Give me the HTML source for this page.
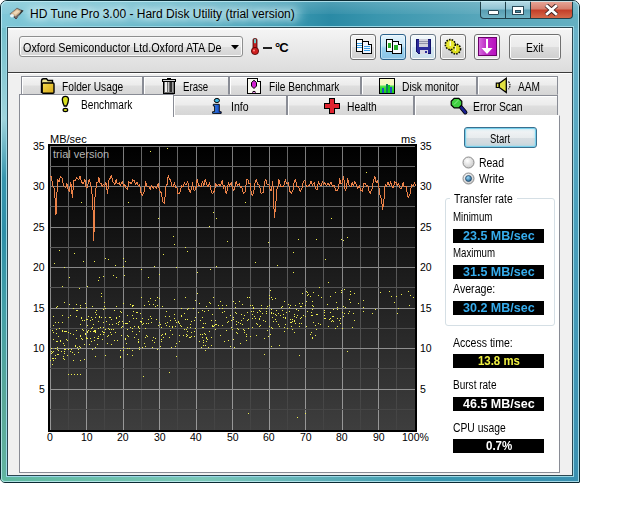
<!DOCTYPE html>
<html><head><meta charset="utf-8">
<style>
*{box-sizing:border-box;margin:0;padding:0}
html,body{width:640px;height:512px;overflow:hidden;background:#fff;font-family:"Liberation Sans",sans-serif;color:#000}
.a{position:absolute}
#win{left:0;top:0;width:580px;height:483px;border:1px solid #0b2a33;border-radius:7px 7px 1px 5px;overflow:hidden}
#hl{left:0;top:0;width:580px;height:483px;border-radius:7px 7px 5px 5px;box-shadow:inset 0 0 0 2px #0b2a33, inset 0 0 0 1px #0b2a33}
#client{left:7px;top:27px;width:566px;height:449px;border:1px solid #2b4650;background:#f0f0f0;box-shadow:0 0 0 1px #9ad7e5}
#panel{left:0;top:0;width:564px;height:44px;background:linear-gradient(#fff 0px,#fff 1px,#f4f4f4 2px,#dcdcdc 100%)}
#pline{left:0;top:44px;width:564px;height:1px;background:#3c3c3c}
#pline2{left:0;top:45px;width:564px;height:1px;background:#fff}
.title{left:29px;top:6px;font-size:12px;color:#000;white-space:nowrap;text-shadow:0 0 6px #e8f8fb,0 0 10px #e8f8fb}
.cap{top:0;height:18px;border:1px solid #20404a;border-top:none}
.ui{font-size:11px;letter-spacing:-0.2px;white-space:nowrap}
.btn{width:26px;height:26px;border:1px solid #707070;border-radius:3px;background:linear-gradient(#f2f2f2 0%,#ebebeb 48%,#dddddd 52%,#cfcfcf 100%);box-shadow:inset 0 0 0 1px #fbfbfb}
.tab{height:19px;border:1px solid #898c95;border-bottom-color:#d4d4d4;background:linear-gradient(#f4f4f4 0%,#ececec 45%,#dedede 55%,#d6d6d6 100%);box-shadow:inset 1px 1px 0 #fff}
.tt{position:absolute;font-size:11px;letter-spacing:-0.3px;white-space:nowrap;top:3px}
.val{left:453px;width:91px;height:14px;background:#000}
.lab{left:452px;font-size:11px;letter-spacing:-0.2px;white-space:nowrap}
.ax{font-size:10.5px;white-space:nowrap;color:#000}
.lbl{font-size:12px;line-height:12px;white-space:nowrap;transform-origin:0 0}
</style></head><body>
<div id="win" class="a">
  <div class="a" style="left:0;top:0;width:578px;height:27px;background:linear-gradient(90deg,#80c8d8 0%,#70bccd 15%,#5aaec2 35%,#3a98b0 50%,#2a8aa5 57%,#3a96ae 65%,#5aa8bc 85%,#64b0c2 100%)"></div>
  <div class="a" style="left:22px;top:4px;width:280px;height:18px;border-radius:9px;background:rgba(190,235,245,0.32);filter:blur(4px)"></div>
  <div class="a" style="left:0;top:0;width:578px;height:13px;background:linear-gradient(rgba(255,255,255,0.18),rgba(255,255,255,0.05))"></div>
  <div class="a" style="left:0;top:27px;width:7px;height:455px;background:linear-gradient(#74c0cc 0%,#a0d4dc 20%,#3896ae 33%,#2e8fa8 45%,#45a0a8 62%,#5aa898 82%,#62b4a0 100%)"></div>
  <div class="a" style="left:571px;top:27px;width:7px;height:455px;background:linear-gradient(#6ab2c8 0%,#4aa0bc 40%,#3a90b0 100%)"></div>
  <div class="a" style="left:0;top:475px;width:578px;height:7px;background:linear-gradient(90deg,#5fb8a0 0%,#7cc8b8 35%,#60b0b8 55%,#3a98b0 75%,#3a90b0 100%)"></div>
<!-- app icon -->
  <svg class="a" style="left:7px;top:4px" width="20" height="18" viewBox="8 5 20 18">
    <path d="M9.5 14 L17 7.8 L23.5 10.8 L16 19 Z" fill="#6a6868"/>
    <path d="M11 13.5 L17 8.8 L21.5 11.2 L15.5 16.5 Z" fill="#d8b890"/>
    <path d="M13 13 L17 10 L19.5 11.5 L15.5 14.8 Z" fill="#f0d8b8"/>
    <path d="M21.5 9.8 L23.5 10.8 L19 15.5 Z" fill="#303838"/>
    <ellipse cx="12" cy="15.8" rx="2" ry="1.8" fill="#e8f4f8"/>
    <path d="M14 17 L16 19 L17.5 17.5" fill="none" stroke="#504850" stroke-width="1"/>
  </svg>
  <div class="a title">HD Tune Pro 3.00 - Hard Disk Utility (trial version)</div>
  <!-- caption buttons -->
  <div class="a cap" style="left:479px;width:26px;border-radius:0 0 0 4px;background:linear-gradient(#b7dbe6 0%,#92c4d4 45%,#5a9fb3 55%,#6fb3c4 100%)"></div>
  <div class="a cap" style="left:504px;width:26px;background:linear-gradient(#b7dbe6 0%,#92c4d4 45%,#5a9fb3 55%,#6fb3c4 100%)"></div>
  <div class="a cap" style="left:529px;width:43px;border-radius:0 0 4px 0;background:linear-gradient(#e8a89a 0%,#d7806e 45%,#c4402a 55%,#d46a4a 100%)"></div>
  <div class="a" style="left:487px;top:9px;width:11px;height:5px;background:#fff;border:1px solid #2a4a58;border-radius:1px"></div>
  <div class="a" style="left:511px;top:5px;width:12px;height:9px;border:1px solid #2a4a58;background:#fff"></div><div class="a" style="left:514px;top:9px;width:6px;height:3px;background:#4a8aa0;border:1px solid #2a4a58"></div>
  <svg class="a" style="left:543px;top:3px" width="15" height="12" viewBox="0 0 14 11">
    <path d="M2 1 L12 10 M12 1 L2 10" stroke="#3a2020" stroke-width="4.2"/>
    <path d="M2 1 L12 10 M12 1 L2 10" stroke="#fff" stroke-width="2.6"/>
  </svg>
  <div class="a" style="left:0;top:0;width:578px;height:481px;border-radius:6px 6px 0 4px;box-shadow:inset 0 0 0 1px rgba(200,240,248,0.75)"></div>
</div>

<div id="client" class="a">
  <div id="panel" class="a"></div>
  <div id="pline" class="a"></div>
  <div id="pline2" class="a"></div>
</div>

<!-- combo box -->
<div class="a" style="left:19px;top:36px;width:224px;height:21px;border:1px solid #8e8f8f;border-radius:3px;background:linear-gradient(#f4f4f4 0%,#ececec 50%,#dfdfdf 51%,#d4d4d4 100%);box-shadow:inset 0 0 0 1px #fafafa"></div>

<svg class="a" style="left:231px;top:45px" width="8" height="5"><path d="M0 0 H8 L4 4.5 Z" fill="#000"/></svg>

<!-- thermometer -->
<svg class="a" style="left:250px;top:38px" width="10" height="17" viewBox="0 0 10 17">
  <rect x="3" y="0.5" width="4" height="11" rx="1.5" fill="#c02020" stroke="#400" stroke-width="0.8"/>
  <rect x="4" y="1.2" width="2" height="4" fill="#6cc"/>
  <circle cx="5" cy="13" r="3.6" fill="#d02020" stroke="#400" stroke-width="0.8"/>
  <circle cx="4" cy="12.5" r="1" fill="#f88"/>
</svg>
<div class="a" style="left:263px;top:47px;width:9px;height:2px;background:#202020"></div>
<div class="a" style="left:275px;top:40px;font-size:13px;font-weight:bold;white-space:nowrap;letter-spacing:-1px">°C</div>

<!-- toolbar buttons -->
<div class="a btn" style="left:350px;top:34px"></div>
<div class="a btn" style="left:380px;top:34px;border-color:#2c628b;background:linear-gradient(#e5f4fc 0%,#c4e5f6 45%,#98d1ef 55%,#8ac4e6 100%);box-shadow:inset 0 0 0 1px rgba(255,255,255,0.4)"></div>
<div class="a btn" style="left:410px;top:34px;border-color:#6a7a88;background:linear-gradient(#f2f8fc 0%,#e6f2f8 50%,#d6e8f2 51%,#cadfea 100%)"></div>
<div class="a btn" style="left:440px;top:34px"></div>
<div class="a btn" style="left:474px;top:34px;background:linear-gradient(#f6f6f6,#e8e8e8)"></div>
<div class="a btn" style="left:509px;top:34px;width:52px"></div>

<!-- icons -->
<svg class="a" style="left:350px;top:34px" width="26" height="26" viewBox="350 34 26 26" shape-rendering="crispEdges">
  <rect x="356.5" y="39.5" width="6" height="12" fill="#fff" stroke="#000"/>
  <rect x="357" y="43" width="5" height="1" fill="#38a0e8"/><rect x="357" y="45" width="5" height="1" fill="#38a0e8"/><rect x="357" y="47" width="5" height="1" fill="#38a0e8"/>
  <path d="M362.5 41.5 H368.5 L371.5 44.5 V53.5 H362.5 Z" fill="#eef3fc" stroke="#000"/>
  <path d="M368.5 41.5 V44.5 H371.5" fill="#fff" stroke="#000"/>
  <rect x="364" y="46" width="6" height="1" fill="#38a0e8"/><rect x="364" y="48" width="6" height="1" fill="#38a0e8"/><rect x="364" y="50" width="6" height="1" fill="#38a0e8"/>
</svg>
<svg class="a" style="left:380px;top:34px" width="26" height="26" viewBox="380 34 26 26" shape-rendering="crispEdges">
  <rect x="386.5" y="39.5" width="6" height="12" fill="#fff" stroke="#000"/>
  <rect x="388" y="43" width="3" height="5" fill="#28b028"/>
  <path d="M392.5 41.5 H398.5 L401.5 44.5 V53.5 H392.5 Z" fill="#f4f8ff" stroke="#000"/>
  <path d="M398.5 41.5 V44.5 H401.5" fill="#fff" stroke="#000"/>
  <rect x="394" y="45" width="4" height="5" fill="#28b028"/>
</svg>
<svg class="a" style="left:410px;top:34px" width="26" height="26" viewBox="410 34 26 26" shape-rendering="crispEdges">
  <path d="M416 39 H431 V54 H418 L416 52 Z" fill="#2a2a9a"/>
  <path d="M416.5 39.5 H430.5 V53.5 H418.5 L416.5 51.5 Z" fill="none" stroke="#10106a"/>
  <rect x="419" y="39" width="9" height="8" fill="#d0d0dc"/>
  <rect x="419" y="41" width="9" height="1" fill="#9090a8"/><rect x="419" y="43" width="9" height="1" fill="#9090a8"/>
  <rect x="420" y="50" width="8" height="4" fill="#d8d8e4"/>
  <rect x="425" y="51" width="2" height="2" fill="#2a2a9a"/>
</svg>
<svg class="a" style="left:440px;top:34px" width="26" height="26" viewBox="440 34 26 26">
  <circle cx="455.5" cy="49" r="5" fill="#e0e020" stroke="#101000" stroke-width="1.6" stroke-dasharray="1.6 1.1"/>
  <circle cx="450.3" cy="44.6" r="5" fill="#e8e830" stroke="#101000" stroke-width="1.6" stroke-dasharray="1.6 1.1"/>
  <rect x="449.6" y="41" width="1.2" height="5" fill="#fff"/>
  <rect x="454.8" y="46" width="1.2" height="5" fill="#f8f8c0"/>
</svg>
<svg class="a" style="left:474px;top:34px" width="26" height="26" viewBox="474 34 26 26">
  <defs><linearGradient id="pg" x1="0" y1="0" x2="1" y2="0"><stop offset="0" stop-color="#d870e0"/><stop offset="0.4" stop-color="#c030c8"/><stop offset="1" stop-color="#b810c0"/></linearGradient></defs>
  <rect x="478.5" y="37.5" width="18" height="18" fill="url(#pg)" stroke="#6a006a" shape-rendering="crispEdges"/>
  <rect x="486" y="39" width="2" height="10" fill="#fff"/>
  <path d="M481.5 48 H492.5 L487 54 Z" fill="#fff"/>
</svg>
<!-- tabs row 1 -->
<div class="a tab" style="left:21px;top:76px;width:122px"></div>
<div class="a tab" style="left:143px;top:76px;width:86px"></div>
<div class="a tab" style="left:229px;top:76px;width:132px"></div>
<div class="a tab" style="left:361px;top:76px;width:116px"></div>
<div class="a tab" style="left:477px;top:76px;width:81px"></div>
<!-- tabs row 2 -->
<div class="a tab" style="left:173px;top:95px;width:114px;height:21px"></div>
<div class="a tab" style="left:287px;top:95px;width:127px;height:21px"></div>
<div class="a tab" style="left:414px;top:95px;width:144px;height:21px"></div>
<!-- content panel -->
<div class="a" style="left:19px;top:115px;width:541px;height:358px;border:1px solid #898c95;border-top-color:#fff;background:#fff"></div>
<!-- selected tab -->
<div class="a" style="left:19px;top:94px;width:155px;height:23px;border:1px solid #898c95;border-bottom:none;background:#fff"></div>

<!-- tab icons -->
<svg class="a" style="left:38px;top:76px" width="20" height="20" viewBox="38 76 20 20">
  <path d="M41.5 93 V81 Q41.5 78.8 43.5 78.8 H46.5 L48 80.5 H52.5 V86" fill="#f0e890" stroke="#000" stroke-width="1.4"/>
  <defs><linearGradient id="fg" x1="0" y1="0" x2="1" y2="1"><stop offset="0" stop-color="#f4dc50"/><stop offset="1" stop-color="#d8a818"/></linearGradient></defs>
  <rect x="42.2" y="83" width="11.8" height="10.3" rx="1" fill="url(#fg)" stroke="#000" stroke-width="1.4"/>
</svg>
<svg class="a" style="left:160px;top:76px" width="18" height="20" viewBox="160 76 18 20" shape-rendering="crispEdges">
  <rect x="163.5" y="80.5" width="11" height="12.5" fill="#707070" stroke="#000"/>
  <rect x="165" y="82" width="2" height="10" fill="#f0f0f0"/><rect x="168" y="82" width="1" height="10" fill="#c8c8c8"/>
  <rect x="170" y="82" width="2" height="10" fill="#303030"/><rect x="172" y="82" width="1" height="10" fill="#a0a0a0"/>
  <rect x="162.5" y="79" width="13" height="2.5" fill="#d8d8d8" stroke="#000"/>
  <rect x="167" y="77.5" width="4" height="1.5" fill="#000"/>
</svg>
<svg class="a" style="left:244px;top:76px" width="20" height="20" viewBox="244 76 20 20">
  <path d="M247.5 78.5 H257.5 L260.5 81.5 V93.5 H247.5 Z" fill="#f8f8f0" stroke="#000" stroke-width="1.1" shape-rendering="crispEdges"/>
  <path d="M257.5 78.5 V81.5 H260.5" fill="#fff" stroke="#000" stroke-width="1" shape-rendering="crispEdges"/>
  <path d="M254 80.3 L256.5 82.5 V86 L254 88.5 L251.5 86 V82.5 Z" fill="#d020d0" stroke="#000" stroke-width="1"/>
  <path d="M252.2 92.4 Q254 89.8 255.8 92.4" fill="#d020d0" stroke="#000" stroke-width="1"/>
</svg>
<svg class="a" style="left:376px;top:76px" width="22" height="20" viewBox="376 76 22 20" shape-rendering="crispEdges">
  <defs><linearGradient id="dmg" x1="0" y1="0" x2="0" y2="1"><stop offset="0" stop-color="#fafac8"/><stop offset="0.4" stop-color="#f8f8c0"/><stop offset="0.55" stop-color="#40e040"/><stop offset="1" stop-color="#10d010"/></linearGradient></defs>
  <rect x="379.5" y="78.5" width="15" height="15" fill="url(#dmg)" stroke="#000" stroke-width="1.2"/>
  <rect x="382" y="88" width="2" height="5" fill="#2050c0"/>
  <rect x="386" y="84" width="1.5" height="9" fill="#108060"/>
  <rect x="387.5" y="85" width="2.5" height="8" fill="#10d020"/>
  <rect x="390" y="87" width="2" height="6" fill="#2050c0"/>
</svg>
<svg class="a" style="left:492px;top:76px" width="24" height="20" viewBox="492 76 24 20">
  <path d="M496.3 83.2 H499.3 V87.5 H496.3 Z" fill="#e0e040" stroke="#000" stroke-width="1.2"/>
  <path d="M499.3 83.2 L506.3 78.3 V92.5 L499.3 87.5 Z" fill="#e0e040" stroke="#000" stroke-width="1.3"/>
  <path d="M508.5 81.5 Q511.5 85.3 508.5 89.2" fill="none" stroke="#000" stroke-width="1.1" stroke-dasharray="1.5 1"/>
</svg>
<svg class="a" style="left:60px;top:94px" width="12" height="20" viewBox="60 94 12 20">
  <path d="M62.3 99.5 Q62.3 96.3 65.4 96.3 Q68.5 96.3 68.5 99.5 Q68.5 102 66.6 106 H64.2 Q62.3 102 62.3 99.5 Z" fill="#d8e020" stroke="#000" stroke-width="1.3"/>
  <ellipse cx="65.4" cy="110" rx="2.3" ry="1.6" fill="#d8e020" stroke="#000" stroke-width="1.2"/>
</svg>
<svg class="a" style="left:210px;top:96px" width="14" height="20" viewBox="210 96 14 20">
  <defs><linearGradient id="ig" x1="0" y1="0" x2="1" y2="0"><stop offset="0" stop-color="#3a8af0"/><stop offset="1" stop-color="#1040c0"/></linearGradient></defs>
  <ellipse cx="216.9" cy="100.5" rx="2.6" ry="2.1" fill="#40b8e0" stroke="#000" stroke-width="1"/>
  <path d="M213.3 104.3 H219.3 V111.7 H221.2 V113.4 H212.6 V111.7 H214.6 V106 H213.3 Z" fill="url(#ig)" stroke="#000" stroke-width="0.9"/>
</svg>
<svg class="a" style="left:322px;top:96px" width="20" height="20" viewBox="322 96 20 20" shape-rendering="crispEdges">
  <path d="M329.5 98.5 H334.5 V103.5 H339.5 V108.5 H334.5 V113.5 H329.5 V108.5 H324.5 V103.5 H329.5 Z" fill="#e02430" stroke="#000" stroke-width="1.3"/>
</svg>
<svg class="a" style="left:448px;top:95px" width="22" height="22" viewBox="448 95 22 22">
  <path d="M460 106 L465.3 112.3" stroke="#000" stroke-width="4.2" stroke-linecap="round"/>
  <path d="M460 106 L465.3 112.3" stroke="#1a2090" stroke-width="2.6" stroke-linecap="round"/>
  <path d="M454.2 98.3 H458.8 L461.8 101.3 V104.9 L458.8 107.9 H454.2 L451.2 104.9 V101.3 Z" fill="#40d040" stroke="#000" stroke-width="1.2"/>
  <path d="M454 104.5 L458.5 100" stroke="#a0f0a0" stroke-width="0.8"/>
</svg>

<!-- chart -->
<div class="a ax" style="left:50px;top:133px;font-size:11px">MB/sec</div>
<div class="a ax" style="left:401px;top:133px;font-size:11px">ms</div>
<svg class="a" style="left:48px;top:144px" width="369" height="288" viewBox="0 0 369 288">
  <defs><linearGradient id="bg" x1="0" y1="0" x2="0" y2="1">
    <stop offset="0" stop-color="#000"/><stop offset="1" stop-color="#3e3e3e"/></linearGradient><linearGradient id="gmaj" x1="0" y1="0" x2="0" y2="1"><stop offset="0" stop-color="#7c7c7c"/><stop offset="1" stop-color="#989898"/></linearGradient><linearGradient id="gmin" x1="0" y1="0" x2="0" y2="1"><stop offset="0" stop-color="#686868"/><stop offset="1" stop-color="#434343"/></linearGradient></defs>
  <rect x="0" y="0" width="369" height="288" fill="#000"/>
  <rect x="2" y="2" width="365" height="284" fill="url(#bg)"/>
  <g shape-rendering="crispEdges"><rect x="2" y="2" width="1" height="284" fill="url(#gmaj)"/><rect x="20" y="2" width="1" height="284" fill="url(#gmin)"/><rect x="38" y="2" width="1" height="284" fill="url(#gmaj)"/><rect x="56" y="2" width="1" height="284" fill="url(#gmin)"/><rect x="75" y="2" width="1" height="284" fill="url(#gmaj)"/><rect x="93" y="2" width="1" height="284" fill="url(#gmin)"/><rect x="111" y="2" width="1" height="284" fill="url(#gmaj)"/><rect x="129" y="2" width="1" height="284" fill="url(#gmin)"/><rect x="148" y="2" width="1" height="284" fill="url(#gmaj)"/><rect x="166" y="2" width="1" height="284" fill="url(#gmin)"/><rect x="184" y="2" width="1" height="284" fill="url(#gmaj)"/><rect x="202" y="2" width="1" height="284" fill="url(#gmin)"/><rect x="221" y="2" width="1" height="284" fill="url(#gmaj)"/><rect x="239" y="2" width="1" height="284" fill="url(#gmin)"/><rect x="257" y="2" width="1" height="284" fill="url(#gmaj)"/><rect x="275" y="2" width="1" height="284" fill="url(#gmin)"/><rect x="294" y="2" width="1" height="284" fill="url(#gmaj)"/><rect x="312" y="2" width="1" height="284" fill="url(#gmin)"/><rect x="330" y="2" width="1" height="284" fill="url(#gmaj)"/><rect x="348" y="2" width="1" height="284" fill="url(#gmin)"/><rect x="2" y="2" width="365" height="1" fill="#7c7c7c"/><rect x="2" y="22" width="365" height="1" fill="#656565"/><rect x="2" y="42" width="365" height="1" fill="#808080"/><rect x="2" y="62" width="365" height="1" fill="#606060"/><rect x="2" y="83" width="365" height="1" fill="#848484"/><rect x="2" y="103" width="365" height="1" fill="#5b5b5b"/><rect x="2" y="123" width="365" height="1" fill="#888888"/><rect x="2" y="143" width="365" height="1" fill="#565656"/><rect x="2" y="164" width="365" height="1" fill="#8c8c8c"/><rect x="2" y="184" width="365" height="1" fill="#505050"/><rect x="2" y="204" width="365" height="1" fill="#909090"/><rect x="2" y="224" width="365" height="1" fill="#4b4b4b"/><rect x="2" y="245" width="365" height="1" fill="#949494"/><rect x="2" y="265" width="365" height="1" fill="#464646"/></g>
  <text x="5" y="14" font-family="Liberation Sans" font-size="11" fill="#b4b4b4">trial version</text>
  <g fill="#f0f050" shape-rendering="crispEdges"><rect x="102" y="7" width="1" height="1"/><rect x="119" y="4" width="1" height="1"/><rect x="33" y="58" width="1" height="1"/><rect x="80" y="58" width="1" height="1"/><rect x="110" y="74" width="1" height="1"/><rect x="165" y="68" width="1" height="1"/><rect x="168" y="74" width="1" height="1"/><rect x="161" y="82" width="1" height="1"/><rect x="125" y="92" width="1" height="1"/><rect x="126" y="100" width="1" height="1"/><rect x="179" y="97" width="1" height="1"/><rect x="137" y="103" width="1" height="1"/><rect x="139" y="107" width="1" height="1"/><rect x="115" y="110" width="1" height="1"/><rect x="11" y="106" width="1" height="1"/><rect x="26" y="109" width="1" height="1"/><rect x="57" y="114" width="1" height="1"/><rect x="60" y="115" width="1" height="1"/><rect x="35" y="117" width="1" height="1"/><rect x="46" y="117" width="1" height="1"/><rect x="75" y="114" width="1" height="1"/><rect x="77" y="117" width="1" height="1"/><rect x="67" y="121" width="1" height="1"/><rect x="75" y="122" width="1" height="1"/><rect x="6" y="119" width="1" height="1"/><rect x="16" y="123" width="1" height="1"/><rect x="93" y="125" width="1" height="1"/><rect x="106" y="122" width="1" height="1"/><rect x="100" y="133" width="1" height="1"/><rect x="111" y="130" width="1" height="1"/><rect x="128" y="123" width="1" height="1"/><rect x="149" y="128" width="1" height="1"/><rect x="162" y="125" width="1" height="1"/><rect x="168" y="122" width="1" height="1"/><rect x="21" y="133" width="1" height="1"/><rect x="50" y="136" width="1" height="1"/><rect x="51" y="133" width="1" height="1"/><rect x="55" y="132" width="1" height="1"/><rect x="65" y="131" width="1" height="1"/><rect x="68" y="133" width="1" height="1"/><rect x="76" y="131" width="1" height="1"/><rect x="14" y="142" width="1" height="1"/><rect x="31" y="144" width="1" height="1"/><rect x="39" y="142" width="1" height="1"/><rect x="53" y="149" width="1" height="1"/><rect x="149" y="149" width="1" height="1"/><rect x="93" y="153" width="1" height="1"/><rect x="165" y="153" width="1" height="1"/><rect x="318" y="28" width="1" height="1"/><rect x="197" y="58" width="1" height="1"/><rect x="283" y="74" width="1" height="1"/><rect x="220" y="98" width="1" height="1"/><rect x="250" y="95" width="1" height="1"/><rect x="268" y="95" width="1" height="1"/><rect x="293" y="95" width="1" height="1"/><rect x="295" y="96" width="1" height="1"/><rect x="299" y="93" width="1" height="1"/><rect x="245" y="108" width="1" height="1"/><rect x="277" y="115" width="1" height="1"/><rect x="207" y="118" width="1" height="1"/><rect x="229" y="121" width="1" height="1"/><rect x="245" y="128" width="1" height="1"/><rect x="280" y="138" width="1" height="1"/><rect x="201" y="153" width="1" height="1"/><rect x="222" y="146" width="1" height="1"/><rect x="223" y="153" width="1" height="1"/><rect x="254" y="149" width="1" height="1"/><rect x="259" y="151" width="1" height="1"/><rect x="273" y="153" width="1" height="1"/><rect x="293" y="146" width="1" height="1"/><rect x="296" y="145" width="1" height="1"/><rect x="302" y="150" width="1" height="1"/><rect x="306" y="149" width="1" height="1"/><rect x="332" y="148" width="1" height="1"/><rect x="341" y="147" width="1" height="1"/><rect x="348" y="152" width="1" height="1"/><rect x="353" y="150" width="1" height="1"/><rect x="362" y="151" width="1" height="1"/><rect x="20" y="230" width="1" height="1"/><rect x="23" y="230" width="1" height="1"/><rect x="26" y="230" width="1" height="1"/><rect x="29" y="230" width="1" height="1"/><rect x="32" y="230" width="1" height="1"/><rect x="95" y="232" width="1" height="1"/><rect x="121" y="228" width="1" height="1"/><rect x="200" y="269" width="1" height="1"/><rect x="249" y="273" width="1" height="1"/><rect x="257" y="269" width="1" height="1"/><rect x="251" y="211" width="1" height="1"/><rect x="216" y="210" width="1" height="1"/><rect x="299" y="207" width="1" height="1"/><rect x="19" y="196" width="1" height="1"/><rect x="5" y="195" width="1" height="1"/><rect x="5" y="207" width="1" height="1"/><rect x="25" y="216" width="1" height="1"/><rect x="25" y="190" width="1" height="1"/><rect x="14" y="171" width="1" height="1"/><rect x="33" y="174" width="1" height="1"/><rect x="4" y="186" width="1" height="1"/><rect x="9" y="210" width="1" height="1"/><rect x="46" y="193" width="1" height="1"/><rect x="37" y="189" width="1" height="1"/><rect x="5" y="216" width="1" height="1"/><rect x="39" y="194" width="1" height="1"/><rect x="34" y="195" width="1" height="1"/><rect x="45" y="187" width="1" height="1"/><rect x="33" y="173" width="1" height="1"/><rect x="42" y="176" width="1" height="1"/><rect x="8" y="185" width="1" height="1"/><rect x="10" y="206" width="1" height="1"/><rect x="38" y="175" width="1" height="1"/><rect x="50" y="184" width="1" height="1"/><rect x="34" y="185" width="1" height="1"/><rect x="48" y="170" width="1" height="1"/><rect x="38" y="194" width="1" height="1"/><rect x="37" y="159" width="1" height="1"/><rect x="17" y="187" width="1" height="1"/><rect x="3" y="204" width="1" height="1"/><rect x="8" y="197" width="1" height="1"/><rect x="9" y="203" width="1" height="1"/><rect x="49" y="200" width="1" height="1"/><rect x="32" y="163" width="1" height="1"/><rect x="49" y="194" width="1" height="1"/><rect x="21" y="160" width="1" height="1"/><rect x="10" y="210" width="1" height="1"/><rect x="14" y="187" width="1" height="1"/><rect x="16" y="209" width="1" height="1"/><rect x="22" y="171" width="1" height="1"/><rect x="39" y="181" width="1" height="1"/><rect x="39" y="187" width="1" height="1"/><rect x="44" y="162" width="1" height="1"/><rect x="23" y="205" width="1" height="1"/><rect x="36" y="215" width="1" height="1"/><rect x="13" y="207" width="1" height="1"/><rect x="4" y="220" width="1" height="1"/><rect x="7" y="211" width="1" height="1"/><rect x="50" y="192" width="1" height="1"/><rect x="15" y="199" width="1" height="1"/><rect x="8" y="163" width="1" height="1"/><rect x="27" y="202" width="1" height="1"/><rect x="7" y="204" width="1" height="1"/><rect x="47" y="212" width="1" height="1"/><rect x="54" y="195" width="1" height="1"/><rect x="31" y="202" width="1" height="1"/><rect x="55" y="165" width="1" height="1"/><rect x="16" y="205" width="1" height="1"/><rect x="44" y="175" width="1" height="1"/><rect x="20" y="188" width="1" height="1"/><rect x="56" y="162" width="1" height="1"/><rect x="47" y="186" width="1" height="1"/><rect x="30" y="208" width="1" height="1"/><rect x="3" y="207" width="1" height="1"/><rect x="40" y="172" width="1" height="1"/><rect x="53" y="152" width="1" height="1"/><rect x="22" y="207" width="1" height="1"/><rect x="12" y="196" width="1" height="1"/><rect x="51" y="173" width="1" height="1"/><rect x="37" y="190" width="1" height="1"/><rect x="38" y="163" width="1" height="1"/><rect x="43" y="197" width="1" height="1"/><rect x="45" y="180" width="1" height="1"/><rect x="55" y="190" width="1" height="1"/><rect x="54" y="187" width="1" height="1"/><rect x="8" y="189" width="1" height="1"/><rect x="46" y="186" width="1" height="1"/><rect x="55" y="183" width="1" height="1"/><rect x="32" y="216" width="1" height="1"/><rect x="55" y="178" width="1" height="1"/><rect x="53" y="173" width="1" height="1"/><rect x="47" y="203" width="1" height="1"/><rect x="18" y="195" width="1" height="1"/><rect x="16" y="205" width="1" height="1"/><rect x="52" y="190" width="1" height="1"/><rect x="34" y="176" width="1" height="1"/><rect x="52" y="183" width="1" height="1"/><rect x="30" y="205" width="1" height="1"/><rect x="12" y="197" width="1" height="1"/><rect x="11" y="184" width="1" height="1"/><rect x="32" y="192" width="1" height="1"/><rect x="32" y="191" width="1" height="1"/><rect x="32" y="203" width="1" height="1"/><rect x="44" y="183" width="1" height="1"/><rect x="43" y="173" width="1" height="1"/><rect x="35" y="186" width="1" height="1"/><rect x="40" y="186" width="1" height="1"/><rect x="28" y="166" width="1" height="1"/><rect x="50" y="177" width="1" height="1"/><rect x="32" y="161" width="1" height="1"/><rect x="9" y="205" width="1" height="1"/><rect x="5" y="214" width="1" height="1"/><rect x="38" y="163" width="1" height="1"/><rect x="10" y="178" width="1" height="1"/><rect x="9" y="162" width="1" height="1"/><rect x="14" y="178" width="1" height="1"/><rect x="28" y="160" width="1" height="1"/><rect x="10" y="192" width="1" height="1"/><rect x="20" y="205" width="1" height="1"/><rect x="41" y="200" width="1" height="1"/><rect x="26" y="210" width="1" height="1"/><rect x="36" y="200" width="1" height="1"/><rect x="56" y="158" width="1" height="1"/><rect x="7" y="214" width="1" height="1"/><rect x="44" y="205" width="1" height="1"/><rect x="25" y="164" width="1" height="1"/><rect x="16" y="187" width="1" height="1"/><rect x="33" y="194" width="1" height="1"/><rect x="5" y="188" width="1" height="1"/><rect x="5" y="172" width="1" height="1"/><rect x="46" y="187" width="1" height="1"/><rect x="5" y="181" width="1" height="1"/><rect x="20" y="173" width="1" height="1"/><rect x="16" y="201" width="1" height="1"/><rect x="15" y="214" width="1" height="1"/><rect x="4" y="208" width="1" height="1"/><rect x="18" y="187" width="1" height="1"/><rect x="29" y="203" width="1" height="1"/><rect x="2" y="216" width="1" height="1"/><rect x="42" y="194" width="1" height="1"/><rect x="28" y="186" width="1" height="1"/><rect x="47" y="187" width="1" height="1"/><rect x="47" y="188" width="1" height="1"/><rect x="39" y="175" width="1" height="1"/><rect x="47" y="173" width="1" height="1"/><rect x="24" y="208" width="1" height="1"/><rect x="9" y="197" width="1" height="1"/><rect x="16" y="215" width="1" height="1"/><rect x="48" y="166" width="1" height="1"/><rect x="17" y="205" width="1" height="1"/><rect x="27" y="201" width="1" height="1"/><rect x="16" y="158" width="1" height="1"/><rect x="32" y="180" width="1" height="1"/><rect x="19" y="211" width="1" height="1"/><rect x="22" y="189" width="1" height="1"/><rect x="13" y="207" width="1" height="1"/><rect x="16" y="207" width="1" height="1"/><rect x="4" y="214" width="1" height="1"/><rect x="14" y="186" width="1" height="1"/><rect x="43" y="173" width="1" height="1"/><rect x="50" y="194" width="1" height="1"/><rect x="56" y="188" width="1" height="1"/><rect x="37" y="190" width="1" height="1"/><rect x="51" y="172" width="1" height="1"/><rect x="46" y="196" width="1" height="1"/><rect x="29" y="166" width="1" height="1"/><rect x="47" y="168" width="1" height="1"/><rect x="39" y="188" width="1" height="1"/><rect x="3" y="209" width="1" height="1"/><rect x="7" y="178" width="1" height="1"/><rect x="36" y="176" width="1" height="1"/><rect x="28" y="194" width="1" height="1"/><rect x="43" y="184" width="1" height="1"/><rect x="38" y="193" width="1" height="1"/><rect x="15" y="212" width="1" height="1"/><rect x="42" y="187" width="1" height="1"/><rect x="55" y="188" width="1" height="1"/><rect x="28" y="172" width="1" height="1"/><rect x="124" y="190" width="1" height="1"/><rect x="73" y="183" width="1" height="1"/><rect x="90" y="195" width="1" height="1"/><rect x="63" y="185" width="1" height="1"/><rect x="133" y="182" width="1" height="1"/><rect x="113" y="183" width="1" height="1"/><rect x="70" y="180" width="1" height="1"/><rect x="164" y="181" width="1" height="1"/><rect x="107" y="156" width="1" height="1"/><rect x="106" y="198" width="1" height="1"/><rect x="161" y="187" width="1" height="1"/><rect x="72" y="167" width="1" height="1"/><rect x="71" y="172" width="1" height="1"/><rect x="154" y="183" width="1" height="1"/><rect x="155" y="196" width="1" height="1"/><rect x="57" y="185" width="1" height="1"/><rect x="90" y="198" width="1" height="1"/><rect x="91" y="187" width="1" height="1"/><rect x="139" y="183" width="1" height="1"/><rect x="158" y="162" width="1" height="1"/><rect x="88" y="190" width="1" height="1"/><rect x="166" y="181" width="1" height="1"/><rect x="104" y="203" width="1" height="1"/><rect x="68" y="179" width="1" height="1"/><rect x="159" y="195" width="1" height="1"/><rect x="113" y="195" width="1" height="1"/><rect x="162" y="159" width="1" height="1"/><rect x="126" y="155" width="1" height="1"/><rect x="117" y="189" width="1" height="1"/><rect x="137" y="175" width="1" height="1"/><rect x="127" y="202" width="1" height="1"/><rect x="158" y="193" width="1" height="1"/><rect x="94" y="180" width="1" height="1"/><rect x="164" y="182" width="1" height="1"/><rect x="90" y="183" width="1" height="1"/><rect x="75" y="203" width="1" height="1"/><rect x="156" y="189" width="1" height="1"/><rect x="156" y="167" width="1" height="1"/><rect x="72" y="206" width="1" height="1"/><rect x="94" y="203" width="1" height="1"/><rect x="85" y="167" width="1" height="1"/><rect x="139" y="187" width="1" height="1"/><rect x="114" y="190" width="1" height="1"/><rect x="63" y="175" width="1" height="1"/><rect x="70" y="178" width="1" height="1"/><rect x="151" y="197" width="1" height="1"/><rect x="84" y="187" width="1" height="1"/><rect x="161" y="158" width="1" height="1"/><rect x="59" y="192" width="1" height="1"/><rect x="155" y="179" width="1" height="1"/><rect x="57" y="173" width="1" height="1"/><rect x="147" y="156" width="1" height="1"/><rect x="84" y="206" width="1" height="1"/><rect x="114" y="162" width="1" height="1"/><rect x="136" y="169" width="1" height="1"/><rect x="107" y="194" width="1" height="1"/><rect x="143" y="177" width="1" height="1"/><rect x="128" y="199" width="1" height="1"/><rect x="84" y="171" width="1" height="1"/><rect x="69" y="196" width="1" height="1"/><rect x="121" y="193" width="1" height="1"/><rect x="123" y="203" width="1" height="1"/><rect x="107" y="162" width="1" height="1"/><rect x="154" y="190" width="1" height="1"/><rect x="84" y="161" width="1" height="1"/><rect x="90" y="197" width="1" height="1"/><rect x="131" y="191" width="1" height="1"/><rect x="130" y="177" width="1" height="1"/><rect x="60" y="191" width="1" height="1"/><rect x="132" y="181" width="1" height="1"/><rect x="138" y="190" width="1" height="1"/><rect x="163" y="176" width="1" height="1"/><rect x="82" y="183" width="1" height="1"/><rect x="89" y="168" width="1" height="1"/><rect x="77" y="194" width="1" height="1"/><rect x="130" y="178" width="1" height="1"/><rect x="100" y="175" width="1" height="1"/><rect x="72" y="212" width="1" height="1"/><rect x="100" y="157" width="1" height="1"/><rect x="137" y="153" width="1" height="1"/><rect x="93" y="178" width="1" height="1"/><rect x="139" y="191" width="1" height="1"/><rect x="98" y="191" width="1" height="1"/><rect x="75" y="206" width="1" height="1"/><rect x="95" y="179" width="1" height="1"/><rect x="163" y="193" width="1" height="1"/><rect x="147" y="173" width="1" height="1"/><rect x="62" y="188" width="1" height="1"/><rect x="158" y="194" width="1" height="1"/><rect x="155" y="198" width="1" height="1"/><rect x="146" y="187" width="1" height="1"/><rect x="60" y="184" width="1" height="1"/><rect x="85" y="161" width="1" height="1"/><rect x="94" y="174" width="1" height="1"/><rect x="124" y="182" width="1" height="1"/><rect x="91" y="205" width="1" height="1"/><rect x="140" y="164" width="1" height="1"/><rect x="160" y="203" width="1" height="1"/><rect x="109" y="153" width="1" height="1"/><rect x="99" y="192" width="1" height="1"/><rect x="111" y="178" width="1" height="1"/><rect x="145" y="164" width="1" height="1"/><rect x="142" y="183" width="1" height="1"/><rect x="92" y="177" width="1" height="1"/><rect x="65" y="185" width="1" height="1"/><rect x="84" y="211" width="1" height="1"/><rect x="117" y="172" width="1" height="1"/><rect x="154" y="173" width="1" height="1"/><rect x="66" y="196" width="1" height="1"/><rect x="135" y="191" width="1" height="1"/><rect x="102" y="172" width="1" height="1"/><rect x="139" y="165" width="1" height="1"/><rect x="70" y="178" width="1" height="1"/><rect x="119" y="178" width="1" height="1"/><rect x="78" y="199" width="1" height="1"/><rect x="73" y="168" width="1" height="1"/><rect x="92" y="169" width="1" height="1"/><rect x="112" y="180" width="1" height="1"/><rect x="128" y="178" width="1" height="1"/><rect x="109" y="161" width="1" height="1"/><rect x="157" y="201" width="1" height="1"/><rect x="70" y="178" width="1" height="1"/><rect x="121" y="172" width="1" height="1"/><rect x="152" y="190" width="1" height="1"/><rect x="142" y="180" width="1" height="1"/><rect x="122" y="186" width="1" height="1"/><rect x="97" y="202" width="1" height="1"/><rect x="85" y="174" width="1" height="1"/><rect x="79" y="204" width="1" height="1"/><rect x="131" y="197" width="1" height="1"/><rect x="79" y="171" width="1" height="1"/><rect x="63" y="200" width="1" height="1"/><rect x="117" y="190" width="1" height="1"/><rect x="75" y="179" width="1" height="1"/><rect x="88" y="174" width="1" height="1"/><rect x="91" y="184" width="1" height="1"/><rect x="102" y="154" width="1" height="1"/><rect x="97" y="184" width="1" height="1"/><rect x="79" y="185" width="1" height="1"/><rect x="103" y="174" width="1" height="1"/><rect x="154" y="193" width="1" height="1"/><rect x="58" y="177" width="1" height="1"/><rect x="157" y="190" width="1" height="1"/><rect x="97" y="193" width="1" height="1"/><rect x="88" y="168" width="1" height="1"/><rect x="68" y="173" width="1" height="1"/><rect x="163" y="201" width="1" height="1"/><rect x="160" y="166" width="1" height="1"/><rect x="62" y="173" width="1" height="1"/><rect x="156" y="167" width="1" height="1"/><rect x="74" y="182" width="1" height="1"/><rect x="101" y="160" width="1" height="1"/><rect x="77" y="195" width="1" height="1"/><rect x="113" y="197" width="1" height="1"/><rect x="84" y="162" width="1" height="1"/><rect x="61" y="173" width="1" height="1"/><rect x="61" y="185" width="1" height="1"/><rect x="122" y="176" width="1" height="1"/><rect x="90" y="182" width="1" height="1"/><rect x="103" y="178" width="1" height="1"/><rect x="105" y="193" width="1" height="1"/><rect x="110" y="181" width="1" height="1"/><rect x="142" y="193" width="1" height="1"/><rect x="109" y="205" width="1" height="1"/><rect x="104" y="196" width="1" height="1"/><rect x="113" y="191" width="1" height="1"/><rect x="66" y="166" width="1" height="1"/><rect x="113" y="195" width="1" height="1"/><rect x="98" y="179" width="1" height="1"/><rect x="151" y="159" width="1" height="1"/><rect x="146" y="176" width="1" height="1"/><rect x="111" y="154" width="1" height="1"/><rect x="75" y="159" width="1" height="1"/><rect x="64" y="180" width="1" height="1"/><rect x="74" y="177" width="1" height="1"/><rect x="146" y="192" width="1" height="1"/><rect x="158" y="197" width="1" height="1"/><rect x="112" y="202" width="1" height="1"/><rect x="77" y="179" width="1" height="1"/><rect x="131" y="179" width="1" height="1"/><rect x="143" y="192" width="1" height="1"/><rect x="126" y="174" width="1" height="1"/><rect x="118" y="167" width="1" height="1"/><rect x="68" y="162" width="1" height="1"/><rect x="100" y="179" width="1" height="1"/><rect x="165" y="182" width="1" height="1"/><rect x="141" y="193" width="1" height="1"/><rect x="138" y="185" width="1" height="1"/><rect x="84" y="162" width="1" height="1"/><rect x="121" y="182" width="1" height="1"/><rect x="57" y="211" width="1" height="1"/><rect x="124" y="183" width="1" height="1"/><rect x="155" y="201" width="1" height="1"/><rect x="128" y="212" width="1" height="1"/><rect x="96" y="199" width="1" height="1"/><rect x="81" y="177" width="1" height="1"/><rect x="79" y="179" width="1" height="1"/><rect x="71" y="177" width="1" height="1"/><rect x="73" y="191" width="1" height="1"/><rect x="152" y="176" width="1" height="1"/><rect x="86" y="193" width="1" height="1"/><rect x="118" y="181" width="1" height="1"/><rect x="105" y="160" width="1" height="1"/><rect x="84" y="184" width="1" height="1"/><rect x="115" y="193" width="1" height="1"/><rect x="63" y="190" width="1" height="1"/><rect x="117" y="179" width="1" height="1"/><rect x="78" y="179" width="1" height="1"/><rect x="127" y="182" width="1" height="1"/><rect x="91" y="203" width="1" height="1"/><rect x="154" y="166" width="1" height="1"/><rect x="57" y="164" width="1" height="1"/><rect x="108" y="175" width="1" height="1"/><rect x="81" y="204" width="1" height="1"/><rect x="61" y="180" width="1" height="1"/><rect x="133" y="164" width="1" height="1"/><rect x="86" y="182" width="1" height="1"/><rect x="143" y="188" width="1" height="1"/><rect x="127" y="176" width="1" height="1"/><rect x="153" y="203" width="1" height="1"/><rect x="82" y="160" width="1" height="1"/><rect x="139" y="175" width="1" height="1"/><rect x="93" y="177" width="1" height="1"/><rect x="126" y="170" width="1" height="1"/><rect x="164" y="170" width="1" height="1"/><rect x="133" y="172" width="1" height="1"/><rect x="136" y="185" width="1" height="1"/><rect x="80" y="192" width="1" height="1"/><rect x="157" y="206" width="1" height="1"/><rect x="68" y="174" width="1" height="1"/><rect x="72" y="213" width="1" height="1"/><rect x="133" y="171" width="1" height="1"/><rect x="138" y="192" width="1" height="1"/><rect x="96" y="161" width="1" height="1"/><rect x="155" y="183" width="1" height="1"/><rect x="157" y="179" width="1" height="1"/><rect x="79" y="210" width="1" height="1"/><rect x="150" y="168" width="1" height="1"/><rect x="147" y="184" width="1" height="1"/><rect x="67" y="188" width="1" height="1"/><rect x="79" y="191" width="1" height="1"/><rect x="59" y="199" width="1" height="1"/><rect x="231" y="182" width="1" height="1"/><rect x="253" y="162" width="1" height="1"/><rect x="222" y="190" width="1" height="1"/><rect x="206" y="172" width="1" height="1"/><rect x="230" y="180" width="1" height="1"/><rect x="244" y="175" width="1" height="1"/><rect x="182" y="202" width="1" height="1"/><rect x="235" y="173" width="1" height="1"/><rect x="211" y="166" width="1" height="1"/><rect x="183" y="183" width="1" height="1"/><rect x="241" y="167" width="1" height="1"/><rect x="192" y="179" width="1" height="1"/><rect x="211" y="182" width="1" height="1"/><rect x="174" y="164" width="1" height="1"/><rect x="237" y="173" width="1" height="1"/><rect x="203" y="167" width="1" height="1"/><rect x="174" y="181" width="1" height="1"/><rect x="185" y="173" width="1" height="1"/><rect x="212" y="167" width="1" height="1"/><rect x="188" y="177" width="1" height="1"/><rect x="234" y="162" width="1" height="1"/><rect x="198" y="192" width="1" height="1"/><rect x="242" y="161" width="1" height="1"/><rect x="182" y="171" width="1" height="1"/><rect x="219" y="186" width="1" height="1"/><rect x="246" y="188" width="1" height="1"/><rect x="194" y="160" width="1" height="1"/><rect x="180" y="196" width="1" height="1"/><rect x="196" y="186" width="1" height="1"/><rect x="196" y="171" width="1" height="1"/><rect x="232" y="171" width="1" height="1"/><rect x="176" y="167" width="1" height="1"/><rect x="238" y="168" width="1" height="1"/><rect x="184" y="185" width="1" height="1"/><rect x="185" y="195" width="1" height="1"/><rect x="202" y="161" width="1" height="1"/><rect x="212" y="172" width="1" height="1"/><rect x="179" y="178" width="1" height="1"/><rect x="233" y="163" width="1" height="1"/><rect x="218" y="169" width="1" height="1"/><rect x="187" y="159" width="1" height="1"/><rect x="236" y="157" width="1" height="1"/><rect x="228" y="171" width="1" height="1"/><rect x="195" y="185" width="1" height="1"/><rect x="204" y="161" width="1" height="1"/><rect x="223" y="183" width="1" height="1"/><rect x="207" y="174" width="1" height="1"/><rect x="227" y="170" width="1" height="1"/><rect x="225" y="169" width="1" height="1"/><rect x="211" y="175" width="1" height="1"/><rect x="215" y="176" width="1" height="1"/><rect x="251" y="182" width="1" height="1"/><rect x="218" y="167" width="1" height="1"/><rect x="213" y="161" width="1" height="1"/><rect x="213" y="164" width="1" height="1"/><rect x="185" y="175" width="1" height="1"/><rect x="235" y="170" width="1" height="1"/><rect x="198" y="196" width="1" height="1"/><rect x="202" y="192" width="1" height="1"/><rect x="204" y="174" width="1" height="1"/><rect x="190" y="178" width="1" height="1"/><rect x="251" y="179" width="1" height="1"/><rect x="239" y="184" width="1" height="1"/><rect x="178" y="161" width="1" height="1"/><rect x="224" y="173" width="1" height="1"/><rect x="187" y="168" width="1" height="1"/><rect x="224" y="155" width="1" height="1"/><rect x="209" y="180" width="1" height="1"/><rect x="178" y="173" width="1" height="1"/><rect x="243" y="182" width="1" height="1"/><rect x="189" y="189" width="1" height="1"/><rect x="167" y="180" width="1" height="1"/><rect x="189" y="184" width="1" height="1"/><rect x="205" y="167" width="1" height="1"/><rect x="199" y="153" width="1" height="1"/><rect x="172" y="157" width="1" height="1"/><rect x="237" y="174" width="1" height="1"/><rect x="223" y="202" width="1" height="1"/><rect x="252" y="174" width="1" height="1"/><rect x="176" y="197" width="1" height="1"/><rect x="236" y="187" width="1" height="1"/><rect x="248" y="173" width="1" height="1"/><rect x="247" y="161" width="1" height="1"/><rect x="227" y="154" width="1" height="1"/><rect x="242" y="175" width="1" height="1"/><rect x="214" y="169" width="1" height="1"/><rect x="246" y="177" width="1" height="1"/><rect x="188" y="188" width="1" height="1"/><rect x="172" y="191" width="1" height="1"/><rect x="211" y="174" width="1" height="1"/><rect x="244" y="177" width="1" height="1"/><rect x="209" y="168" width="1" height="1"/><rect x="242" y="178" width="1" height="1"/><rect x="253" y="179" width="1" height="1"/><rect x="224" y="184" width="1" height="1"/><rect x="228" y="166" width="1" height="1"/><rect x="255" y="171" width="1" height="1"/><rect x="247" y="179" width="1" height="1"/><rect x="223" y="168" width="1" height="1"/><rect x="199" y="176" width="1" height="1"/><rect x="236" y="183" width="1" height="1"/><rect x="205" y="164" width="1" height="1"/><rect x="193" y="170" width="1" height="1"/><rect x="212" y="181" width="1" height="1"/><rect x="254" y="159" width="1" height="1"/><rect x="196" y="188" width="1" height="1"/><rect x="219" y="162" width="1" height="1"/><rect x="170" y="161" width="1" height="1"/><rect x="216" y="194" width="1" height="1"/><rect x="167" y="176" width="1" height="1"/><rect x="221" y="161" width="1" height="1"/><rect x="248" y="165" width="1" height="1"/><rect x="223" y="165" width="1" height="1"/><rect x="228" y="177" width="1" height="1"/><rect x="208" y="179" width="1" height="1"/><rect x="183" y="183" width="1" height="1"/><rect x="249" y="171" width="1" height="1"/><rect x="241" y="163" width="1" height="1"/><rect x="190" y="185" width="1" height="1"/><rect x="195" y="174" width="1" height="1"/><rect x="251" y="182" width="1" height="1"/><rect x="170" y="181" width="1" height="1"/><rect x="218" y="164" width="1" height="1"/><rect x="168" y="180" width="1" height="1"/><rect x="251" y="159" width="1" height="1"/><rect x="204" y="183" width="1" height="1"/><rect x="186" y="203" width="1" height="1"/><rect x="167" y="185" width="1" height="1"/><rect x="253" y="173" width="1" height="1"/><rect x="178" y="186" width="1" height="1"/><rect x="188" y="180" width="1" height="1"/><rect x="171" y="164" width="1" height="1"/><rect x="243" y="178" width="1" height="1"/><rect x="223" y="169" width="1" height="1"/><rect x="250" y="166" width="1" height="1"/><rect x="231" y="201" width="1" height="1"/><rect x="225" y="177" width="1" height="1"/><rect x="194" y="180" width="1" height="1"/><rect x="244" y="185" width="1" height="1"/><rect x="200" y="175" width="1" height="1"/><rect x="227" y="175" width="1" height="1"/><rect x="199" y="168" width="1" height="1"/><rect x="204" y="170" width="1" height="1"/><rect x="252" y="162" width="1" height="1"/><rect x="193" y="176" width="1" height="1"/><rect x="230" y="169" width="1" height="1"/><rect x="221" y="151" width="1" height="1"/><rect x="221" y="182" width="1" height="1"/><rect x="246" y="170" width="1" height="1"/><rect x="221" y="154" width="1" height="1"/><rect x="192" y="199" width="1" height="1"/><rect x="205" y="163" width="1" height="1"/><rect x="246" y="176" width="1" height="1"/><rect x="240" y="160" width="1" height="1"/><rect x="191" y="157" width="1" height="1"/><rect x="228" y="166" width="1" height="1"/><rect x="174" y="168" width="1" height="1"/><rect x="185" y="157" width="1" height="1"/><rect x="188" y="169" width="1" height="1"/><rect x="208" y="191" width="1" height="1"/><rect x="234" y="166" width="1" height="1"/><rect x="174" y="161" width="1" height="1"/><rect x="187" y="163" width="1" height="1"/><rect x="246" y="172" width="1" height="1"/><rect x="220" y="192" width="1" height="1"/><rect x="183" y="176" width="1" height="1"/><rect x="217" y="177" width="1" height="1"/><rect x="180" y="177" width="1" height="1"/><rect x="200" y="184" width="1" height="1"/><rect x="237" y="180" width="1" height="1"/><rect x="198" y="190" width="1" height="1"/><rect x="258" y="147" width="1" height="1"/><rect x="276" y="174" width="1" height="1"/><rect x="288" y="158" width="1" height="1"/><rect x="287" y="148" width="1" height="1"/><rect x="267" y="191" width="1" height="1"/><rect x="264" y="194" width="1" height="1"/><rect x="279" y="160" width="1" height="1"/><rect x="294" y="168" width="1" height="1"/><rect x="280" y="182" width="1" height="1"/><rect x="295" y="172" width="1" height="1"/><rect x="282" y="152" width="1" height="1"/><rect x="272" y="180" width="1" height="1"/><rect x="295" y="162" width="1" height="1"/><rect x="258" y="182" width="1" height="1"/><rect x="293" y="148" width="1" height="1"/><rect x="258" y="157" width="1" height="1"/><rect x="282" y="168" width="1" height="1"/><rect x="262" y="152" width="1" height="1"/><rect x="284" y="172" width="1" height="1"/><rect x="287" y="184" width="1" height="1"/><rect x="267" y="181" width="1" height="1"/><rect x="263" y="188" width="1" height="1"/><rect x="284" y="176" width="1" height="1"/><rect x="264" y="171" width="1" height="1"/><rect x="265" y="148" width="1" height="1"/><rect x="292" y="179" width="1" height="1"/><rect x="260" y="150" width="1" height="1"/><rect x="282" y="174" width="1" height="1"/><rect x="289" y="165" width="1" height="1"/><rect x="262" y="190" width="1" height="1"/><rect x="285" y="177" width="1" height="1"/><rect x="291" y="176" width="1" height="1"/><rect x="263" y="168" width="1" height="1"/><rect x="270" y="179" width="1" height="1"/><rect x="269" y="170" width="1" height="1"/><rect x="296" y="169" width="1" height="1"/><rect x="283" y="177" width="1" height="1"/><rect x="268" y="185" width="1" height="1"/><rect x="271" y="143" width="1" height="1"/><rect x="294" y="184" width="1" height="1"/><rect x="292" y="174" width="1" height="1"/><rect x="268" y="170" width="1" height="1"/><rect x="289" y="182" width="1" height="1"/><rect x="257" y="161" width="1" height="1"/><rect x="264" y="161" width="1" height="1"/><rect x="265" y="178" width="1" height="1"/><rect x="264" y="157" width="1" height="1"/><rect x="264" y="193" width="1" height="1"/><rect x="281" y="175" width="1" height="1"/><rect x="265" y="162" width="1" height="1"/><rect x="289" y="174" width="1" height="1"/><rect x="259" y="167" width="1" height="1"/><rect x="285" y="172" width="1" height="1"/><rect x="270" y="151" width="1" height="1"/><rect x="276" y="171" width="1" height="1"/><rect x="276" y="166" width="1" height="1"/><rect x="264" y="165" width="1" height="1"/><rect x="263" y="171" width="1" height="1"/><rect x="257" y="172" width="1" height="1"/><rect x="277" y="174" width="1" height="1"/><rect x="289" y="163" width="1" height="1"/><rect x="285" y="165" width="1" height="1"/><rect x="259" y="148" width="1" height="1"/><rect x="276" y="168" width="1" height="1"/><rect x="315" y="163" width="1" height="1"/><rect x="304" y="183" width="1" height="1"/><rect x="305" y="169" width="1" height="1"/><rect x="300" y="169" width="1" height="1"/><rect x="297" y="163" width="1" height="1"/><rect x="315" y="167" width="1" height="1"/><rect x="327" y="165" width="1" height="1"/><rect x="301" y="167" width="1" height="1"/><rect x="306" y="176" width="1" height="1"/><rect x="301" y="155" width="1" height="1"/><rect x="302" y="158" width="1" height="1"/><rect x="302" y="147" width="1" height="1"/><rect x="310" y="159" width="1" height="1"/><rect x="315" y="156" width="1" height="1"/><rect x="324" y="169" width="1" height="1"/><rect x="343" y="152" width="1" height="1"/><rect x="360" y="147" width="1" height="1"/><rect x="361" y="161" width="1" height="1"/><rect x="365" y="153" width="1" height="1"/><rect x="346" y="158" width="1" height="1"/><rect x="350" y="164" width="1" height="1"/><rect x="349" y="169" width="1" height="1"/></g>
  <g fill="#ec8248" shape-rendering="crispEdges"><rect x="2" y="32" width="1" height="1"/><rect x="3" y="32" width="1" height="5"/><rect x="4" y="37" width="1" height="5"/><rect x="5" y="42" width="1" height="2"/><rect x="6" y="44" width="1" height="10"/><rect x="7" y="54" width="1" height="17"/><rect x="8" y="48" width="1" height="22"/><rect x="9" y="35" width="1" height="13"/><rect x="10" y="36" width="1" height="2"/><rect x="11" y="34" width="1" height="4"/><rect x="12" y="32" width="1" height="2"/><rect x="13" y="33" width="1" height="1"/><rect x="14" y="34" width="1" height="5"/><rect x="15" y="39" width="1" height="3"/><rect x="16" y="42" width="1" height="1"/><rect x="17" y="43" width="1" height="1"/><rect x="18" y="39" width="1" height="4"/><rect x="19" y="40" width="1" height="5"/><rect x="20" y="45" width="1" height="2"/><rect x="21" y="43" width="1" height="5"/><rect x="22" y="38" width="1" height="5"/><rect x="23" y="40" width="1" height="10"/><rect x="24" y="46" width="1" height="8"/><rect x="25" y="36" width="1" height="10"/><rect x="26" y="36" width="1" height="1"/><rect x="27" y="35" width="1" height="2"/><rect x="28" y="33" width="1" height="2"/><rect x="29" y="34" width="1" height="1"/><rect x="30" y="35" width="1" height="1"/><rect x="31" y="32" width="1" height="3"/><rect x="32" y="32" width="1" height="4"/><rect x="33" y="36" width="1" height="3"/><rect x="34" y="38" width="1" height="2"/><rect x="35" y="38" width="1" height="2"/><rect x="36" y="35" width="1" height="3"/><rect x="37" y="36" width="1" height="7"/><rect x="38" y="43" width="1" height="1"/><rect x="39" y="40" width="1" height="4"/><rect x="40" y="36" width="1" height="4"/><rect x="41" y="35" width="1" height="3"/><rect x="42" y="38" width="1" height="4"/><rect x="43" y="42" width="1" height="8"/><rect x="44" y="50" width="1" height="16"/><rect x="45" y="66" width="1" height="31"/><rect x="46" y="53" width="1" height="35"/><rect x="47" y="44" width="1" height="9"/><rect x="48" y="38" width="1" height="6"/><rect x="49" y="38" width="1" height="1"/><rect x="50" y="33" width="1" height="5"/><rect x="51" y="34" width="1" height="5"/><rect x="52" y="39" width="1" height="1"/><rect x="53" y="39" width="1" height="3"/><rect x="54" y="41" width="1" height="2"/><rect x="55" y="40" width="1" height="1"/><rect x="56" y="41" width="1" height="2"/><rect x="57" y="38" width="1" height="3"/><rect x="58" y="39" width="1" height="7"/><rect x="59" y="45" width="1" height="5"/><rect x="60" y="36" width="1" height="9"/><rect x="61" y="34" width="1" height="2"/><rect x="62" y="32" width="1" height="3"/><rect x="63" y="31" width="1" height="3"/><rect x="64" y="34" width="1" height="4"/><rect x="65" y="38" width="1" height="1"/><rect x="66" y="39" width="1" height="2"/><rect x="67" y="36" width="1" height="4"/><rect x="68" y="35" width="1" height="4"/><rect x="69" y="39" width="1" height="1"/><rect x="70" y="39" width="1" height="1"/><rect x="71" y="38" width="1" height="3"/><rect x="72" y="40" width="1" height="2"/><rect x="73" y="38" width="1" height="2"/><rect x="74" y="37" width="1" height="3"/><rect x="75" y="40" width="1" height="3"/><rect x="76" y="40" width="1" height="2"/><rect x="77" y="41" width="1" height="3"/><rect x="78" y="44" width="1" height="1"/><rect x="79" y="43" width="1" height="3"/><rect x="80" y="37" width="1" height="6"/><rect x="81" y="38" width="1" height="1"/><rect x="82" y="38" width="1" height="2"/><rect x="83" y="38" width="1" height="2"/><rect x="84" y="35" width="1" height="3"/><rect x="85" y="36" width="1" height="1"/><rect x="86" y="36" width="1" height="3"/><rect x="87" y="39" width="1" height="2"/><rect x="88" y="38" width="1" height="2"/><rect x="89" y="38" width="1" height="3"/><rect x="90" y="41" width="1" height="1"/><rect x="91" y="40" width="1" height="3"/><rect x="92" y="43" width="1" height="6"/><rect x="93" y="48" width="1" height="3"/><rect x="94" y="50" width="1" height="2"/><rect x="95" y="48" width="1" height="2"/><rect x="96" y="42" width="1" height="6"/><rect x="97" y="37" width="1" height="5"/><rect x="98" y="39" width="1" height="3"/><rect x="99" y="42" width="1" height="1"/><rect x="100" y="42" width="1" height="1"/><rect x="101" y="43" width="1" height="2"/><rect x="102" y="43" width="1" height="3"/><rect x="103" y="41" width="1" height="2"/><rect x="104" y="42" width="1" height="2"/><rect x="105" y="43" width="1" height="2"/><rect x="106" y="42" width="1" height="1"/><rect x="107" y="43" width="1" height="1"/><rect x="108" y="43" width="1" height="2"/><rect x="109" y="40" width="1" height="3"/><rect x="110" y="39" width="1" height="5"/><rect x="111" y="44" width="1" height="3"/><rect x="112" y="47" width="1" height="2"/><rect x="113" y="48" width="1" height="5"/><rect x="114" y="53" width="1" height="5"/><rect x="115" y="58" width="1" height="1"/><rect x="116" y="53" width="1" height="7"/><rect x="117" y="42" width="1" height="11"/><rect x="118" y="40" width="1" height="2"/><rect x="119" y="33" width="1" height="8"/><rect x="120" y="31" width="1" height="3"/><rect x="121" y="34" width="1" height="2"/><rect x="122" y="35" width="1" height="3"/><rect x="123" y="38" width="1" height="4"/><rect x="124" y="42" width="1" height="1"/><rect x="125" y="40" width="1" height="3"/><rect x="126" y="38" width="1" height="3"/><rect x="127" y="41" width="1" height="3"/><rect x="128" y="43" width="1" height="1"/><rect x="129" y="44" width="1" height="6"/><rect x="130" y="49" width="1" height="1"/><rect x="131" y="48" width="1" height="2"/><rect x="132" y="44" width="1" height="4"/><rect x="133" y="41" width="1" height="3"/><rect x="134" y="42" width="1" height="1"/><rect x="135" y="40" width="1" height="3"/><rect x="136" y="38" width="1" height="2"/><rect x="137" y="40" width="1" height="1"/><rect x="138" y="39" width="1" height="2"/><rect x="139" y="37" width="1" height="2"/><rect x="140" y="39" width="1" height="7"/><rect x="141" y="45" width="1" height="3"/><rect x="142" y="46" width="1" height="3"/><rect x="143" y="42" width="1" height="4"/><rect x="144" y="38" width="1" height="4"/><rect x="145" y="42" width="1" height="4"/><rect x="146" y="46" width="1" height="1"/><rect x="147" y="43" width="1" height="3"/><rect x="148" y="36" width="1" height="8"/><rect x="149" y="35" width="1" height="4"/><rect x="150" y="39" width="1" height="3"/><rect x="151" y="41" width="1" height="1"/><rect x="152" y="42" width="1" height="1"/><rect x="153" y="39" width="1" height="4"/><rect x="154" y="37" width="1" height="2"/><rect x="155" y="39" width="1" height="3"/><rect x="156" y="36" width="1" height="5"/><rect x="157" y="35" width="1" height="3"/><rect x="158" y="38" width="1" height="3"/><rect x="159" y="41" width="1" height="2"/><rect x="160" y="40" width="1" height="3"/><rect x="161" y="38" width="1" height="3"/><rect x="162" y="41" width="1" height="5"/><rect x="163" y="46" width="1" height="3"/><rect x="164" y="49" width="1" height="1"/><rect x="165" y="47" width="1" height="2"/><rect x="166" y="44" width="1" height="4"/><rect x="167" y="39" width="1" height="5"/><rect x="168" y="40" width="1" height="2"/><rect x="169" y="41" width="1" height="1"/><rect x="170" y="40" width="1" height="1"/><rect x="171" y="40" width="1" height="2"/><rect x="172" y="40" width="1" height="2"/><rect x="173" y="37" width="1" height="3"/><rect x="174" y="36" width="1" height="5"/><rect x="175" y="41" width="1" height="4"/><rect x="176" y="41" width="1" height="2"/><rect x="177" y="43" width="1" height="6"/><rect x="178" y="47" width="1" height="3"/><rect x="179" y="41" width="1" height="6"/><rect x="180" y="38" width="1" height="3"/><rect x="181" y="40" width="1" height="3"/><rect x="182" y="39" width="1" height="2"/><rect x="183" y="38" width="1" height="4"/><rect x="184" y="42" width="1" height="3"/><rect x="185" y="45" width="1" height="2"/><rect x="186" y="43" width="1" height="3"/><rect x="187" y="38" width="1" height="5"/><rect x="188" y="37" width="1" height="3"/><rect x="189" y="40" width="1" height="2"/><rect x="190" y="40" width="1" height="1"/><rect x="191" y="39" width="1" height="3"/><rect x="192" y="42" width="1" height="2"/><rect x="193" y="42" width="1" height="2"/><rect x="194" y="44" width="1" height="4"/><rect x="195" y="48" width="1" height="2"/><rect x="196" y="48" width="1" height="1"/><rect x="197" y="41" width="1" height="7"/><rect x="198" y="35" width="1" height="6"/><rect x="199" y="35" width="1" height="1"/><rect x="200" y="36" width="1" height="4"/><rect x="201" y="39" width="1" height="1"/><rect x="202" y="39" width="1" height="8"/><rect x="203" y="47" width="1" height="4"/><rect x="204" y="50" width="1" height="2"/><rect x="205" y="46" width="1" height="4"/><rect x="206" y="39" width="1" height="7"/><rect x="207" y="36" width="1" height="3"/><rect x="208" y="35" width="1" height="3"/><rect x="209" y="38" width="1" height="3"/><rect x="210" y="40" width="1" height="1"/><rect x="211" y="41" width="1" height="3"/><rect x="212" y="44" width="1" height="5"/><rect x="213" y="49" width="1" height="1"/><rect x="214" y="48" width="1" height="1"/><rect x="215" y="42" width="1" height="7"/><rect x="216" y="37" width="1" height="5"/><rect x="217" y="35" width="1" height="2"/><rect x="218" y="36" width="1" height="4"/><rect x="219" y="40" width="1" height="1"/><rect x="220" y="40" width="1" height="1"/><rect x="221" y="41" width="1" height="4"/><rect x="222" y="45" width="1" height="2"/><rect x="223" y="42" width="1" height="5"/><rect x="224" y="37" width="1" height="5"/><rect x="225" y="42" width="1" height="23"/><rect x="226" y="65" width="1" height="9"/><rect x="227" y="57" width="1" height="11"/><rect x="228" y="45" width="1" height="12"/><rect x="229" y="42" width="1" height="3"/><rect x="230" y="35" width="1" height="7"/><rect x="231" y="36" width="1" height="4"/><rect x="232" y="40" width="1" height="3"/><rect x="233" y="42" width="1" height="1"/><rect x="234" y="42" width="1" height="1"/><rect x="235" y="41" width="1" height="2"/><rect x="236" y="37" width="1" height="4"/><rect x="237" y="35" width="1" height="3"/><rect x="238" y="38" width="1" height="2"/><rect x="239" y="39" width="1" height="1"/><rect x="240" y="38" width="1" height="4"/><rect x="241" y="42" width="1" height="6"/><rect x="242" y="47" width="1" height="2"/><rect x="243" y="48" width="1" height="2"/><rect x="244" y="46" width="1" height="2"/><rect x="245" y="39" width="1" height="7"/><rect x="246" y="36" width="1" height="3"/><rect x="247" y="35" width="1" height="3"/><rect x="248" y="38" width="1" height="5"/><rect x="249" y="42" width="1" height="1"/><rect x="250" y="42" width="1" height="2"/><rect x="251" y="44" width="1" height="3"/><rect x="252" y="46" width="1" height="2"/><rect x="253" y="44" width="1" height="2"/><rect x="254" y="39" width="1" height="5"/><rect x="255" y="37" width="1" height="2"/><rect x="256" y="36" width="1" height="1"/><rect x="257" y="37" width="1" height="4"/><rect x="258" y="41" width="1" height="2"/><rect x="259" y="42" width="1" height="1"/><rect x="260" y="41" width="1" height="1"/><rect x="261" y="40" width="1" height="2"/><rect x="262" y="37" width="1" height="3"/><rect x="263" y="37" width="1" height="3"/><rect x="264" y="40" width="1" height="2"/><rect x="265" y="39" width="1" height="1"/><rect x="266" y="38" width="1" height="4"/><rect x="267" y="42" width="1" height="3"/><rect x="268" y="45" width="1" height="1"/><rect x="269" y="40" width="1" height="6"/><rect x="270" y="37" width="1" height="3"/><rect x="271" y="39" width="1" height="2"/><rect x="272" y="41" width="1" height="1"/><rect x="273" y="39" width="1" height="3"/><rect x="274" y="37" width="1" height="2"/><rect x="275" y="39" width="1" height="2"/><rect x="276" y="38" width="1" height="2"/><rect x="277" y="39" width="1" height="2"/><rect x="278" y="41" width="1" height="1"/><rect x="279" y="39" width="1" height="2"/><rect x="280" y="39" width="1" height="2"/><rect x="281" y="40" width="1" height="2"/><rect x="282" y="38" width="1" height="2"/><rect x="283" y="38" width="1" height="3"/><rect x="284" y="41" width="1" height="2"/><rect x="285" y="41" width="1" height="1"/><rect x="286" y="41" width="1" height="3"/><rect x="287" y="44" width="1" height="3"/><rect x="288" y="46" width="1" height="1"/><rect x="289" y="45" width="1" height="2"/><rect x="290" y="40" width="1" height="5"/><rect x="291" y="34" width="1" height="6"/><rect x="292" y="36" width="1" height="4"/><rect x="293" y="39" width="1" height="1"/><rect x="294" y="35" width="1" height="4"/><rect x="295" y="32" width="1" height="4"/><rect x="296" y="36" width="1" height="9"/><rect x="297" y="45" width="1" height="2"/><rect x="298" y="39" width="1" height="6"/><rect x="299" y="34" width="1" height="5"/><rect x="300" y="36" width="1" height="5"/><rect x="301" y="41" width="1" height="1"/><rect x="302" y="42" width="1" height="1"/><rect x="303" y="39" width="1" height="4"/><rect x="304" y="38" width="1" height="3"/><rect x="305" y="40" width="1" height="2"/><rect x="306" y="37" width="1" height="3"/><rect x="307" y="38" width="1" height="2"/><rect x="308" y="40" width="1" height="3"/><rect x="309" y="43" width="1" height="2"/><rect x="310" y="42" width="1" height="2"/><rect x="311" y="41" width="1" height="3"/><rect x="312" y="44" width="1" height="3"/><rect x="313" y="46" width="1" height="1"/><rect x="314" y="44" width="1" height="4"/><rect x="315" y="39" width="1" height="5"/><rect x="316" y="39" width="1" height="1"/><rect x="317" y="39" width="1" height="2"/><rect x="318" y="41" width="1" height="2"/><rect x="319" y="41" width="1" height="1"/><rect x="320" y="42" width="1" height="5"/><rect x="321" y="47" width="1" height="2"/><rect x="322" y="47" width="1" height="3"/><rect x="323" y="45" width="1" height="2"/><rect x="324" y="39" width="1" height="6"/><rect x="325" y="35" width="1" height="4"/><rect x="326" y="32" width="1" height="3"/><rect x="327" y="33" width="1" height="5"/><rect x="328" y="37" width="1" height="2"/><rect x="329" y="36" width="1" height="3"/><rect x="330" y="39" width="1" height="5"/><rect x="331" y="44" width="1" height="7"/><rect x="332" y="51" width="1" height="3"/><rect x="333" y="54" width="1" height="6"/><rect x="334" y="60" width="1" height="6"/><rect x="335" y="55" width="1" height="8"/><rect x="336" y="42" width="1" height="13"/><rect x="337" y="40" width="1" height="2"/><rect x="338" y="41" width="1" height="2"/><rect x="339" y="38" width="1" height="3"/><rect x="340" y="38" width="1" height="3"/><rect x="341" y="40" width="1" height="2"/><rect x="342" y="37" width="1" height="3"/><rect x="343" y="39" width="1" height="3"/><rect x="344" y="42" width="1" height="2"/><rect x="345" y="41" width="1" height="3"/><rect x="346" y="37" width="1" height="4"/><rect x="347" y="38" width="1" height="1"/><rect x="348" y="38" width="1" height="3"/><rect x="349" y="40" width="1" height="2"/><rect x="350" y="39" width="1" height="2"/><rect x="351" y="41" width="1" height="3"/><rect x="352" y="44" width="1" height="1"/><rect x="353" y="43" width="1" height="2"/><rect x="354" y="39" width="1" height="4"/><rect x="355" y="38" width="1" height="4"/><rect x="356" y="42" width="1" height="1"/><rect x="357" y="42" width="1" height="1"/><rect x="358" y="42" width="1" height="6"/><rect x="359" y="48" width="1" height="5"/><rect x="360" y="52" width="1" height="2"/><rect x="361" y="50" width="1" height="2"/><rect x="362" y="44" width="1" height="6"/><rect x="363" y="40" width="1" height="4"/><rect x="364" y="41" width="1" height="1"/><rect x="365" y="40" width="1" height="2"/><rect x="366" y="38" width="1" height="2"/><rect x="367" y="40" width="1" height="2"/></g>
</svg>
<!-- y labels left -->
<div class="a ax" style="left:33px;top:140px">35</div>
<div class="a ax" style="left:33px;top:180px">30</div>
<div class="a ax" style="left:33px;top:221px">25</div>
<div class="a ax" style="left:33px;top:261px">20</div>
<div class="a ax" style="left:33px;top:302px">15</div>
<div class="a ax" style="left:33px;top:342px">10</div>
<div class="a ax" style="left:39px;top:383px">5</div>
<!-- y labels right -->
<div class="a ax" style="left:420px;top:140px">35</div>
<div class="a ax" style="left:420px;top:180px">30</div>
<div class="a ax" style="left:420px;top:221px">25</div>
<div class="a ax" style="left:420px;top:261px">20</div>
<div class="a ax" style="left:420px;top:302px">15</div>
<div class="a ax" style="left:420px;top:342px">10</div>
<div class="a ax" style="left:420px;top:383px">5</div>
<!-- x labels -->
<div class="a ax" style="left:47px;top:431px">0</div>
<div class="a ax" style="left:81px;top:431px">10</div>
<div class="a ax" style="left:117px;top:431px">20</div>
<div class="a ax" style="left:154px;top:431px">30</div>
<div class="a ax" style="left:190px;top:431px">40</div>
<div class="a ax" style="left:227px;top:431px">50</div>
<div class="a ax" style="left:263px;top:431px">60</div>
<div class="a ax" style="left:300px;top:431px">70</div>
<div class="a ax" style="left:336px;top:431px">80</div>
<div class="a ax" style="left:373px;top:431px">90</div>
<div class="a ax" style="left:402px;top:431px">100%</div>

<!-- right panel -->
<div class="a" style="left:464px;top:127px;width:73px;height:21px;border:1px solid #3a6f8e;border-radius:3px;background:linear-gradient(#f4f6f8 0%,#e8ecee 50%,#d8dee2 52%,#ccd6dc 100%);box-shadow:inset 0 0 0 1px #78d0ec, inset 0 0 3px 1px rgba(120,215,240,0.6)"></div>

<svg class="a" style="left:462px;top:156px" width="14" height="30" viewBox="0 0 14 30">
  <defs><radialGradient id="rg" cx="0.4" cy="0.35" r="0.7"><stop offset="0" stop-color="#fff"/><stop offset="1" stop-color="#c8c8c8"/></radialGradient>
  <radialGradient id="rb" cx="0.4" cy="0.35" r="0.7"><stop offset="0" stop-color="#9cd8f8"/><stop offset="1" stop-color="#1a5c8a"/></radialGradient></defs>
  <circle cx="6.5" cy="6.5" r="5.5" fill="url(#rg)" stroke="#8a8a8a"/>
  <circle cx="6.5" cy="22.5" r="5.5" fill="url(#rg)" stroke="#8a8a8a"/>
  <circle cx="6.5" cy="22.5" r="3" fill="url(#rb)" stroke="#1c3c5c" stroke-width="0.7"/>
</svg>



<!-- group box -->
<div class="a" style="left:445px;top:198px;width:110px;height:128px;border:1px solid #d5dfe5;border-radius:3px"></div>
<div class="a" style="left:450px;top:194px;width:67px;height:9px;background:#fff"></div>


<div class="a val" style="top:229px"></div>

<div class="a val" style="top:265px"></div>

<div class="a val" style="top:301px"></div>


<div class="a val" style="top:354px"></div>

<div class="a val" style="top:397px"></div>

<div class="a val" style="top:439px"></div>
<div class="a lbl" style="left:23.00px;top:42px;transform:scaleX(0.898)">Oxford Semiconductor Ltd.Oxford ATA De</div>
<div class="a lbl" style="left:62.00px;top:81px;transform:scaleX(0.850)">Folder Usage</div>
<div class="a lbl" style="left:183.00px;top:81px;transform:scaleX(0.805)">Erase</div>
<div class="a lbl" style="left:269.00px;top:81px;transform:scaleX(0.845)">File Benchmark</div>
<div class="a lbl" style="left:402.00px;top:81px;transform:scaleX(0.855)">Disk monitor</div>
<div class="a lbl" style="left:518.00px;top:81px;transform:scaleX(0.846)">AAM</div>
<div class="a lbl" style="left:81.00px;top:99px;transform:scaleX(0.846)">Benchmark</div>
<div class="a lbl" style="left:231.12px;top:101px;transform:scaleX(0.879)">Info</div>
<div class="a lbl" style="left:347.00px;top:101px;transform:scaleX(0.856)">Health</div>
<div class="a lbl" style="left:473.00px;top:101px;transform:scaleX(0.865)">Error Scan</div>
<div class="a lbl" style="left:526.00px;top:42px;transform:scaleX(0.866)">Exit</div>
<div class="a lbl" style="left:490.00px;top:133px;transform:scaleX(0.792)">Start</div>
<div class="a lbl" style="left:479.00px;top:157px;transform:scaleX(0.871)">Read</div>
<div class="a lbl" style="left:479.00px;top:173px;transform:scaleX(0.907)">Write</div>
<div class="a lbl" style="left:454.00px;top:193px;transform:scaleX(0.860)">Transfer rate</div>
<div class="a lbl" style="left:453.00px;top:211px;transform:scaleX(0.810)">Minimum</div>
<div class="a lbl" style="left:453.00px;top:247px;transform:scaleX(0.808)">Maximum</div>
<div class="a lbl" style="left:452.50px;top:283px;transform:scaleX(0.885)">Average:</div>
<div class="a lbl" style="left:452.60px;top:337px;transform:scaleX(0.878)">Access time:</div>
<div class="a lbl" style="left:452.60px;top:379px;transform:scaleX(0.836)">Burst rate</div>
<div class="a lbl" style="left:452.60px;top:422px;transform:scaleX(0.859)">CPU usage</div>
<div class="a lbl" style="left:462.80px;top:230px;font-weight:bold;color:#36acec;transform:scaleX(1.043)">23.5 MB/sec</div>
<div class="a lbl" style="left:462.80px;top:266px;font-weight:bold;color:#36acec;transform:scaleX(1.043)">31.5 MB/sec</div>
<div class="a lbl" style="left:462.80px;top:302px;font-weight:bold;color:#36acec;transform:scaleX(1.043)">30.2 MB/sec</div>
<div class="a lbl" style="left:477.70px;top:355px;font-weight:bold;color:#f0f040;transform:scaleX(0.951)">13.8 ms</div>
<div class="a lbl" style="left:462.80px;top:398px;font-weight:bold;color:#fff;transform:scaleX(1.043)">46.5 MB/sec</div>
<div class="a lbl" style="left:485.50px;top:440px;font-weight:bold;color:#fff;transform:scaleX(0.961)">0.7%</div>

</body></html>
